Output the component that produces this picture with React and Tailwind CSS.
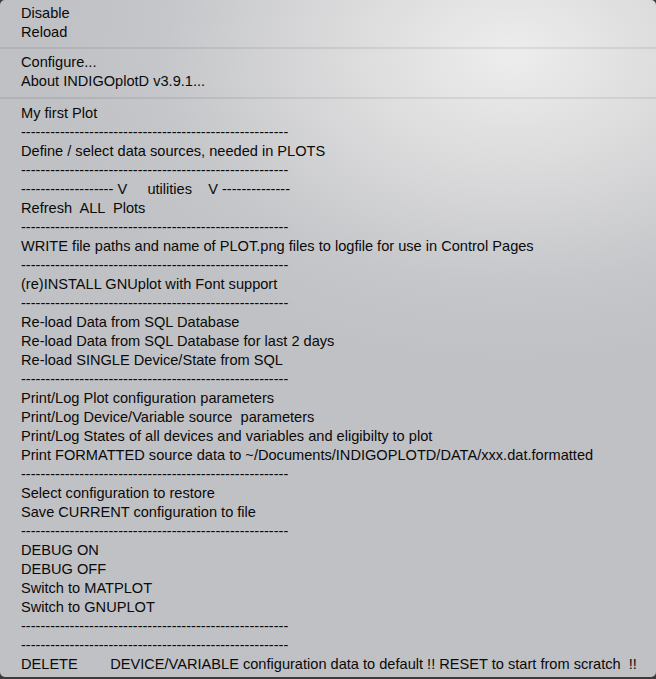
import React from 'react';

const dash = '-'.repeat(55);

const items = [
  'My first Plot',
  dash,
  'Define / select data sources, needed in PLOTS',
  dash,
  '-'.repeat(19) + ' V     utilities    V ' + '-'.repeat(14),
  'Refresh  ALL  Plots',
  dash,
  'WRITE file paths and name of PLOT.png files to logfile for use in Control Pages',
  dash,
  '(re)INSTALL GNUplot with Font support',
  dash,
  'Re-load Data from SQL Database',
  'Re-load Data from SQL Database for last 2 days',
  'Re-load SINGLE Device/State from SQL',
  dash,
  'Print/Log Plot configuration parameters',
  'Print/Log Device/Variable source  parameters',
  'Print/Log States of all devices and variables and eligibilty to plot',
  'Print FORMATTED source data to ~/Documents/INDIGOPLOTD/DATA/xxx.dat.formatted',
  dash,
  'Select configuration to restore',
  'Save CURRENT configuration to file',
  dash,
  'DEBUG ON',
  'DEBUG OFF',
  'Switch to MATPLOT',
  'Switch to GNUPLOT',
  dash,
  dash,
  'DELETE        DEVICE/VARIABLE configuration data to default !! RESET to start from scratch  !!',
];

function Row({ children }) {
  return (
    <div className="h-[19px] flex items-center pl-[21px] whitespace-pre leading-none">
      {children}
    </div>
  );
}

function Sep({ h }) {
  return (
    <div className={`${h} flex items-center`}>
      <div className="h-[2px] w-full bg-black/[0.07]" />
    </div>
  );
}

export default function App() {
  return (
    <div className="h-[679px] w-[656px] bg-[#3b3b3d]">
      <div
        className="h-[677px] rounded-[5px] overflow-hidden text-[14.6px] text-[#0a0a0a] pt-[4px] bg-[radial-gradient(ellipse_70%_45%_at_78%_8%,#ededed_0%,#dcdcdd_35%,#c6c7ca_75%,#c0c1c4_100%)]"
        style={{ fontFamily: '"Liberation Sans", Arial, sans-serif' }}
      >
        <Row>Disable</Row>
        <Row>Reload</Row>
        <Sep h="h-[11px]" />
        <Row>Configure...</Row>
        <Row>About INDIGOplotD v3.9.1...</Row>
        <Sep h="h-[13px]" />
        {items.map((t, i) => (
          <Row key={i}>{t}</Row>
        ))}
      </div>
    </div>
  );
}
